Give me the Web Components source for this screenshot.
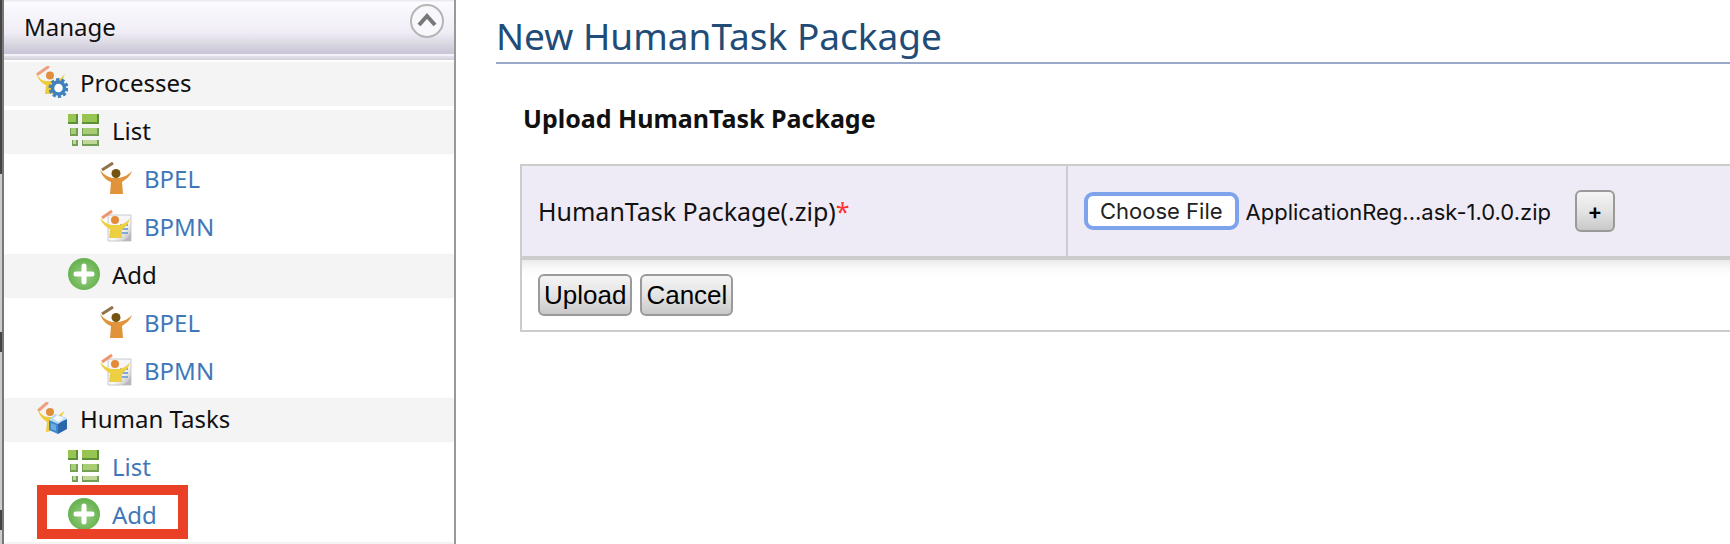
<!DOCTYPE html>
<html lang="en">
<head>
<meta charset="utf-8">
<title>New HumanTask Package</title>
<style>
  body { margin: 0; background: #fff; color: #111; font: 24px/34px "Noto Sans", "Open Sans", sans-serif; }
</style>
</head>
<body>
<app-shell>
  <side-menu slot="side" heading="Manage">
    <menu-row icon="processes" level="1" group>Processes</menu-row>
    <menu-row icon="list" level="2" group>List</menu-row>
    <menu-row icon="bpel" level="3">BPEL</menu-row>
    <menu-row icon="bpmn" level="3">BPMN</menu-row>
    <menu-row icon="add" level="2" group>Add</menu-row>
    <menu-row icon="bpel" level="3">BPEL</menu-row>
    <menu-row icon="bpmn" level="3">BPMN</menu-row>
    <menu-row icon="tasks" level="1" group>Human Tasks</menu-row>
    <menu-row icon="list" level="2">List</menu-row>
    <menu-row icon="add" level="2" marked>Add</menu-row>
    <menu-row level="1" group></menu-row>
  </side-menu>
  <page-title>New HumanTask Package</page-title>
  <upload-form heading="Upload HumanTask Package" label="HumanTask Package(.zip)" filename="ApplicationReg...ask-1.0.0.zip"></upload-form>
</app-shell>

<script>
const ICONS = {
  processes: `
    <path d="M2 8 12 1" stroke="#f0a080" stroke-width="3" stroke-linecap="round"/>
    <path d="M0 7c3 5 6 8 10 8h8c5-1 7-3 11-7-2 6-5 9-8 11l-1 9H9l1-9C5 17 2 13 0 7z" fill="#efcb3c"/>
    <circle cx="14" cy="9.500" r="4" fill="#e08f3c"/>
    <circle cx="22.500" cy="22" r="8" fill="none" stroke="#3f80be" stroke-width="4" stroke-dasharray="3 2.027"/>
    <circle cx="22.500" cy="22" r="6" fill="#fff" stroke="#3f80be" stroke-width="3.500"/>`,
  tasks: `
    <path d="M3 8 11 1" stroke="#f0a080" stroke-width="3" stroke-linecap="round"/>
    <path d="M2 8c3 4 6 7 10 7h5c5-1 8-3 11-6-1 5-5 9-8 11v8l-10 2 1-10C6 17 3 13 2 8z" fill="#efcb3c"/>
    <circle cx="14" cy="10" r="4" fill="#e08f3c"/>
    <path d="m13 18 9 3v11l-9-4z" fill="#3f86cc"/>
    <path d="m22 21 9-4v10l-9 5z" fill="#2b66ad"/>
    <path d="m13 18 6-6 12 4-9 6z" fill="#b5daf5"/>
    <path d="m17 17 4-4 7 3-5 4z" fill="#f4faff"/>
    <path d="m15 21 5 2v6l-5-2z" fill="#6cabe2"/>`,
  list: `
    <g fill="#5b8f38"><path d="M0 0h10v10H0zM14 0h17v10H14z"/><path d="M2 14h8v8H2zM14 14h17v8H14zM4 26h6v6H4zM14 26h17v6H14z" opacity=".85"/></g>
    <path d="M0 0h8v8H0zM14 0h15v8H14z" fill="#98c552"/>
    <path d="M3 14h5v6H3zM15 14h14v6H15z" fill="#a9cd72"/>
    <path d="M5 26h3v4H5zM15 26h14v4H15z" fill="#bfd898"/>`,
  bpel: `
    <path d="M2 8 13 1" stroke="#8d7447" stroke-width="3"/>
    <path d="M0 8c4 5 8 7 12 8h7c5-1 9-3 13-7-2 6-6 8-10 11l1 12H10l1-12C6 18 2 14 0 8z" fill="#e09338"/>
    <circle cx="16" cy="11.500" r="4.500" fill="#755313"/>`,
  bpmn: `
    <defs><linearGradient id="p" x2="1" y2="1"><stop offset=".6" stop-color="#f6f6f8"/><stop offset="1" stop-color="#b4b4b8"/></linearGradient></defs>
    <path d="M8 5h23v26H8z" fill="url(#p)" stroke="#c9cacf"/>
    <path d="M22 31c5-2 8-5 9-10v10z" fill="#b7b7bc"/>
    <path d="M20 15h8M20 19h8M20 23h8" stroke="#7fa8d8" stroke-width="2"/>
    <path d="M2 8 12 1" stroke="#ee9672" stroke-width="3"/>
    <path d="M0 8c4 4 7 6 11 7h8c5-1 8-3 11-7-1 6-5 9-8 12v8H9l1-9C6 17 2 14 0 8z" fill="#edd042"/>
    <circle cx="15" cy="10" r="4" fill="#e48b3a"/>`,
  add: `
    <defs><radialGradient id="g" cy=".55"><stop offset="0" stop-color="#9bcf85"/><stop offset="1" stop-color="#68b250"/></radialGradient></defs>
    <circle cx="16" cy="16" r="16" fill="url(#g)"/>
    <path d="M16 8v16M8 16h16" stroke="#fff" stroke-width="5" stroke-linecap="round"/>`
};

class UiIcon extends HTMLElement {
  connectedCallback() {
    const root = this.attachShadow({ mode: 'open' });
    root.innerHTML = `
      <style>:host { display: block; width: 32px; height: 32px; flex: none; } svg { display: block; }</style>
      <svg width="32" height="32" viewBox="0 0 32 32" fill="none" aria-hidden="true">${ICONS[this.getAttribute('name')] || ''}</svg>`;
  }
}
customElements.define('ui-icon', UiIcon);

class AppShell extends HTMLElement {
  connectedCallback() {
    this.attachShadow({ mode: 'open' }).innerHTML = `
      <style>
        :host { display: grid; grid-template-columns: 2px 454px minmax(0, 1fr); height: 100vh; overflow: hidden; }
        .edge { background: linear-gradient(#444 174px, #ccc 174px 332px, #444 332px 352px, #ccc 352px 510px, #444 510px 530px, #ccc 530px); }
        main { padding: 12px 0 0 40px; }
      </style>
      <div class="edge"></div>
      <slot name="side"></slot>
      <main><slot></slot></main>`;
  }
}
customElements.define('app-shell', AppShell);

class SideMenu extends HTMLElement {
  connectedCallback() {
    this.attachShadow({ mode: 'open' }).innerHTML = `
      <style>
        :host { display: block; overflow: hidden; border-left: 2px solid #777; border-right: 2px solid #999; }
        header {
          display: flex; justify-content: space-between; align-items: flex-start;
          height: 54px; box-sizing: border-box; padding: 4px 10px 0 20px;
          background: linear-gradient(#eceaf0 1px, #fcfbff 2px, #f0edf6 32px, #dbd9e2 43px, #cac5d8 53px);
        }
        h2 { margin: 0; padding-top: 6px; font: inherit; }
        button { display: block; margin: 0; padding: 0; border: 0; background: none; }
        svg { display: block; }
        .rule { height: 6px; margin-bottom: 2px; background: linear-gradient(#f4f2f9 2px, #e2e0e8 2px, #d3d0da); }
        nav { display: grid; gap: 4px; }
      </style>
      <header>
        <h2>${this.getAttribute('heading')}</h2>
        <button type="button" aria-label="Collapse">
          <svg width="34" height="34" viewBox="0 0 34 34" fill="none">
            <circle cx="17" cy="17" r="16" fill="#f8f7fb" stroke="#b4b6b5" stroke-width="2"/>
            <path d="m9 21 8-9 8 9" stroke="#777" stroke-width="4"/>
          </svg>
        </button>
      </header>
      <div class="rule"></div>
      <nav><slot></slot></nav>`;
  }
}
customElements.define('side-menu', SideMenu);

class MenuRow extends HTMLElement {
  connectedCallback() {
    const group = this.hasAttribute('group');
    const icon = this.getAttribute('icon');
    const body = `${icon ? `<ui-icon name="${icon}"></ui-icon>` : ''}<span><slot></slot></span>`;
    this.attachShadow({ mode: 'open' }).innerHTML = `
      <style>
        :host { display: flex; height: 44px; box-sizing: border-box; padding: 4px 0 0 32px; }
        :host([level="2"]) { padding-left: 64px; }
        :host([level="3"]) { padding-left: 96px; }
        :host([group]) { background: #f4f4f4; }
        .item { position: relative; display: flex; gap: 12px; color: inherit; text-decoration: none; }
        a.item { color: #3f78b9; }
        .mark { position: absolute; inset: -13px -31px -1px -31px; border: 10px solid #ea4025; }
      </style>
      ${group ? `<div class="item">${body}</div>`
              : `<a class="item" href="#">${body}${this.hasAttribute('marked') ? '<i class="mark"></i>' : ''}</a>`}`;
  }
}
customElements.define('menu-row', MenuRow);

class PageTitle extends HTMLElement {
  connectedCallback() {
    this.attachShadow({ mode: 'open' }).innerHTML = `
      <style>
        :host { display: block; border-bottom: 2px solid #99a9c9; }
        h1 { margin: 0; padding-bottom: 2px; color: #224c78; font-weight: 400; font-size: 37px; line-height: 48px; }
      </style>
      <h1><slot></slot></h1>`;
  }
}
customElements.define('page-title', PageTitle);

class UploadForm extends HTMLElement {
  connectedCallback() {
    const root = this.attachShadow({ mode: 'open' });
    root.innerHTML = `
      <style>
        :host { display: block; padding: 36px 0 0 24px; font-size: 25px; }
        h2 { margin: 0 0 28px 3px; font-size: 25px; line-height: 36px; font-weight: 700; }
        table { width: 100%; border-spacing: 0; border: solid #ccc; border-width: 2px 0 2px 2px; }
        td, th { padding: 0 16px; text-align: left; font-weight: 400; }
        th { width: 512px; border-right: 2px solid #ccc; }
        .field > * { height: 90px; background: #efebf6; border-bottom: 4px solid #ccc; }
        em { color: #f33; font-style: normal; }
        .file, .actions { display: flex; align-items: center; }
        .file { font: 22px/32px Inter, sans-serif; }
        .file input { display: none; }
        button { margin: 0; white-space: nowrap; color: #000; }
        .choose { height: 38px; padding: 0 12px; border: 4px solid #7ca3ec; border-radius: 9px; background: #fff; font: inherit; line-height: 30px; color: #222; }
        output { margin: 0 24px 0 7px; padding-top: 2px; white-space: nowrap; }
        .act { height: 42px; padding: 0 4px; border: 2px solid #9a9a9a; border-radius: 6px;
               background: linear-gradient(#f4f4f4, #e4e4e4 50%, #c8c8c8); font: 26px/36px "Liberation Sans", Arial, sans-serif; }
        .more { width: 40px; font: 600 22px/34px Inter, sans-serif; }
        .foot td { height: 70px; background: linear-gradient(#ebebeb, #f8f9f8 8px, #fff 16px); }
        .actions { gap: 8px; }
      </style>
      <h2>${this.getAttribute('heading')}</h2>
      <form>
        <table>
          <tr class="field">
            <th scope="row"><label for="file">${this.getAttribute('label')}<em>*</em></label></th>
            <td>
              <div class="file">
                <input type="file" id="file" accept=".zip">
                <button type="button" class="choose">Choose File</button>
                <output for="file">${this.getAttribute('filename')}</output>
                <button type="button" class="act more">+</button>
              </div>
            </td>
          </tr>
          <tr class="foot">
            <td colspan="2">
              <div class="actions">
                <button type="button" class="act">Upload</button>
                <button type="button" class="act">Cancel</button>
              </div>
            </td>
          </tr>
        </table>
      </form>`;
    const input = root.querySelector('input');
    root.querySelector('.choose').addEventListener('click', () => input.click());
    input.addEventListener('change', () => {
      if (input.files[0]) root.querySelector('output').textContent = input.files[0].name;
    });
  }
}
customElements.define('upload-form', UploadForm);
</script>
</body>
</html>
